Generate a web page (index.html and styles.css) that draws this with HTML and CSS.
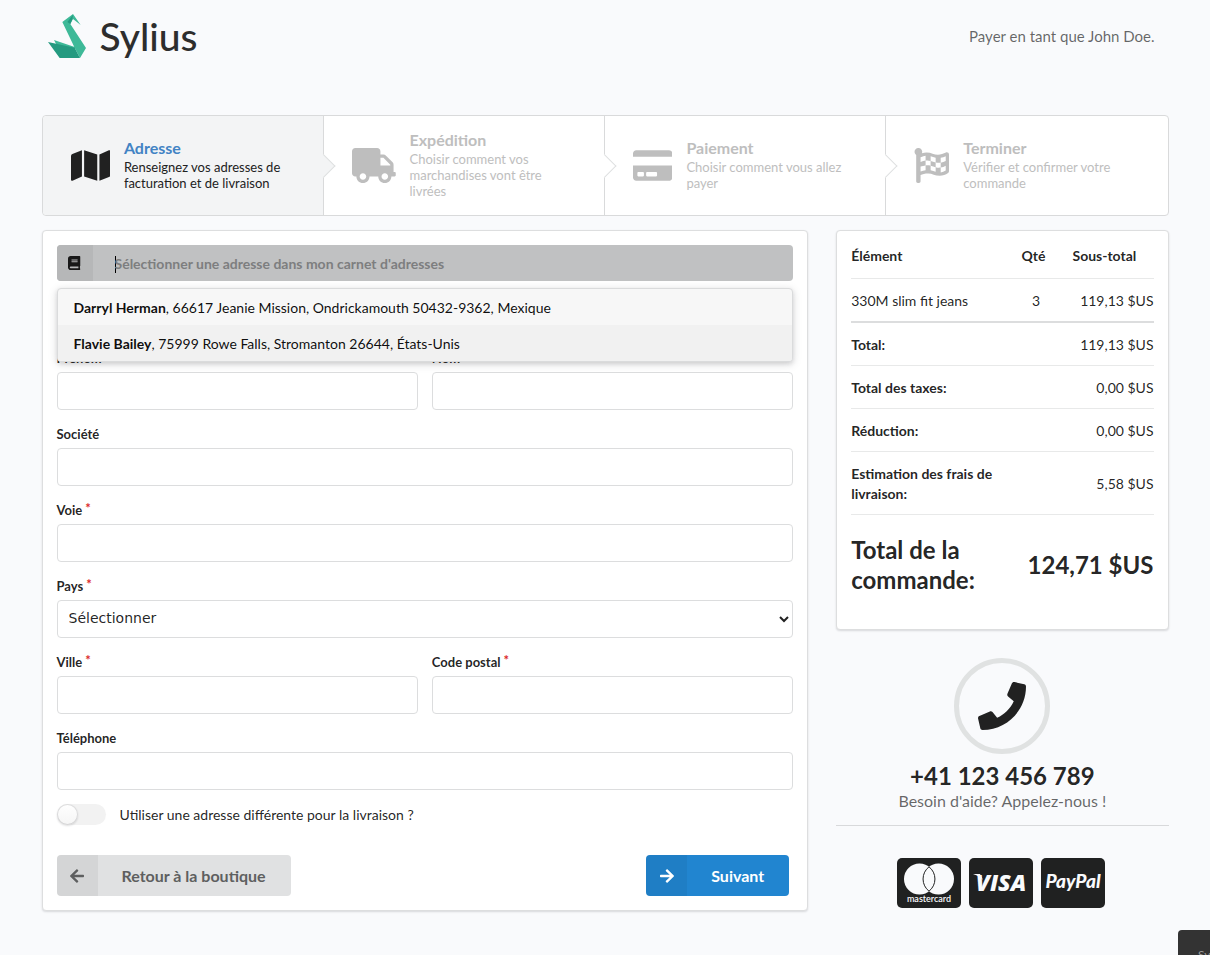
FILE: index.html
```html
<!DOCTYPE html>
<html lang="fr">
<head>
<meta charset="utf-8">
<meta name="viewport" content="width=device-width, initial-scale=1">
<title>Sylius</title>
<link rel="stylesheet" href="styles.css">
</head>
<body>
<div class="container">
  <header class="header">
    <a class="logo" href="#">
      <svg class="logo-mark" viewBox="54 42 114 132" aria-hidden="true">
        <path fill="#3eb998" d="M97 66L129 42L152 75L129 57L121 72L168 144L150 174L134 143ZM72 120L134 141V146L80 136Z"/>
        <path fill="#249a80" d="M54 126L134 143L150 174H89ZM112 66L129 44L127 58L121 72Z"/>
      </svg>
      <span class="logo-text">Sylius</span>
    </a>
    <p class="user-note">Payer en tant que John Doe.</p>
  </header>

  <nav class="steps">
    <a class="step step-active" href="#">
      <svg class="step-icon" viewBox="0 0 576 512"><path d="M0 117.66v346.32c0 11.32 11.43 19.06 21.94 14.86L160 416V32L20.12 87.95A32.006 32.006 0 0 0 0 117.66zM192 416l192 64V96L192 32v384zM554.06 33.16L416 96v384l139.88-55.95A31.996 31.996 0 0 0 576 394.34V48.02c0-11.32-11.43-19.06-21.94-14.86z"/></svg>
      <span class="step-content"><span class="step-title">Adresse</span><span class="step-text">Renseignez vos adresses de facturation et de livraison</span></span>
    </a>
    <div class="step">
      <svg class="step-icon" viewBox="0 0 640 512"><path d="M624 352h-16V243.9c0-12.7-5.1-24.9-14.1-33.9L494 110.1c-9-9-21.2-14.1-33.9-14.1H416V48c0-26.5-21.5-48-48-48H48C21.5 0 0 21.5 0 48v320c0 26.5 21.5 48 48 48h16c0 53 43 96 96 96s96-43 96-96h128c0 53 43 96 96 96s96-43 96-96h48c8.800 0 16-7.200 16-16v-32c0-8.800-7.200-16-16-16zM160 464c-26.500 0-48-21.500-48-48s21.500-48 48-48 48 21.500 48 48-21.500 48-48 48zm320 0c-26.500 0-48-21.500-48-48s21.500-48 48-48 48 21.500 48 48-21.500 48-48 48zm80-208H416V144h44.100l99.900 99.900V256z"/></svg>
      <span class="step-content"><span class="step-title">Expédition</span><span class="step-text">Choisir comment vos marchandises vont être livrées</span></span>
    </div>
    <div class="step">
      <svg class="step-icon" viewBox="0 0 576 512"><path d="M0 432c0 26.500 21.500 48 48 48h480c26.500 0 48-21.500 48-48V256H0v176zm192-68c0-6.600 5.400-12 12-12h136c6.600 0 12 5.400 12 12v40c0 6.600-5.400 12-12 12H204c-6.600 0-12-5.400-12-12v-40zm-128 0c0-6.600 5.400-12 12-12h72c6.600 0 12 5.400 12 12v40c0 6.600-5.400 12-12 12H76c-6.600 0-12-5.400-12-12v-40zM576 80v48H0V80c0-26.500 21.500-48 48-48h480c26.500 0 48 21.500 48 48z"/></svg>
      <span class="step-content"><span class="step-title">Paiement</span><span class="step-text">Choisir comment vous allez payer</span></span>
    </div>
    <div class="step">
      <svg class="step-icon" viewBox="0 0 512 512"><path d="M243.200 189.900V258c26.100 5.900 49.300 15.600 73.600 22.300v-68.200c-26-5.800-49.400-15.500-73.600-22.200zm223.300-123c-34.300 15.900-76.500 31.900-117 31.900C296 98.800 251.700 64 184.300 64c-25 0-47.300 4.400-68 12 2.800-7.300 4.100-15.200 3.600-23.600C118.100 24 94.800 1.200 66.300 0 34.300-1.300 8 24.300 8 56c0 19 9.500 35.800 24 45.900V488c0 13.300 10.700 24 24 24h16c13.300 0 24-10.700 24-24v-94.400c28.300-12.100 63.600-22.100 114.400-22.100 53.600 0 97.800 34.800 165.200 34.800 48.200 0 86.700-16.300 122.500-40.900 8.700-6 13.800-15.800 13.800-26.400V95.900c.1-23.300-24.200-38.800-45.400-29zM169.600 325.500c-25.800 2.700-50 8.200-73.600 16.600v-70.500c26.200-9.300 47.500-15 73.600-17.400v71.300zM464 191c-23.600 9.800-46.300 19.500-73.600 23.900V286c24.800-3.400 51.400-11.800 73.600-26v70.500c-25.100 16.100-48.500 24.700-73.600 27.100V286c-27 3.700-47.900 1.500-73.600-5.600v67.400c-23.900-7.400-47.300-16.700-73.600-21.300V258c-19.700-4.400-40.800-6.800-73.600-3.800v-70c-22.400 3.100-44.600 10.200-73.600 20.900v-70.500c33.200-12.200 50.100-19.800 73.600-22v71.600c27-3.700 48.400-1.300 73.600 5.700v-67.400c23.700 7.400 47.200 16.700 73.600 21.300v68.400c23.700 5.300 47.600 6.900 73.600 2.700V143c27-4.800 52.300-13.600 73.600-22.500z"/></svg>
      <span class="step-content"><span class="step-title">Terminer</span><span class="step-text">Vérifier et confirmer votre commande</span></span>
    </div>
  </nav>

  <div class="columns">
    <main class="segment">
      <form class="form">
        <div class="address-book">
          <div class="search">
            <label class="search-icon" for="book"><svg class="book-icon" viewBox="0 0 448 512"><path d="M448 360V24c0-13.300-10.700-24-24-24H96C43 0 0 43 0 96v320c0 53 43 96 96 96h328c13.300 0 24-10.700 24-24v-16c0-7.500-3.500-14.300-8.900-18.700-4.200-15.400-4.200-59.300 0-74.700 5.400-4.300 8.900-11.100 8.900-18.600zM128 134c0-3.300 2.700-6 6-6h212c3.300 0 6 2.700 6 6v20c0 3.300-2.700 6-6 6H134c-3.300 0-6-2.700-6-6v-20zm0 64c0-3.300 2.700-6 6-6h212c3.300 0 6 2.700 6 6v20c0 3.300-2.700 6-6 6H134c-3.300 0-6-2.700-6-6v-20zm253.400 250H96c-17.700 0-32-14.300-32-32 0-17.600 14.400-32 32-32h285.400c-1.900 17.100-1.900 46.900 0 64z"/></svg></label>
            <input class="search-input" id="book" type="text" placeholder="Sélectionner une adresse dans mon carnet d'adresses" autocomplete="off">
          </div>
          <div class="menu" role="listbox">
            <div class="menu-item" role="option"><strong>Darryl Herman</strong>, 66617 Jeanie Mission, Ondrickamouth 50432-9362, Mexique</div>
            <div class="menu-item menu-item-selected" role="option"><strong>Flavie Bailey</strong>, 75999 Rowe Falls, Stromanton 26644, États-Unis</div>
          </div>
        </div>

        <div class="fields">
          <div class="field"><label for="first">Prénom</label><input id="first" type="text"></div>
          <div class="field"><label for="last">Nom</label><input id="last" type="text"></div>
        </div>
        <div class="field"><label for="company">Société</label><input id="company" type="text"></div>
        <div class="field required"><label for="street">Voie</label><input id="street" type="text"></div>
        <div class="field required"><label for="country">Pays</label><select id="country"><option>Sélectionner</option></select></div>
        <div class="fields">
          <div class="field required"><label for="city">Ville</label><input id="city" type="text"></div>
          <div class="field required"><label for="postcode">Code postal</label><input id="postcode" type="text"></div>
        </div>
        <div class="field"><label for="phone">Téléphone</label><input id="phone" type="text"></div>
        <label class="toggle"><input class="toggle-input" type="checkbox"><span>Utiliser une adresse différente pour la livraison ?</span></label>

        <div class="actions">
          <a class="button" href="#"><span class="button-icon"><svg viewBox="0 0 448 512"><path d="M257.500 445.100l-22.200 22.200c-9.400 9.400-24.600 9.400-33.900 0L7 273c-9.400-9.400-9.400-24.600 0-33.900L201.400 44.700c9.400-9.400 24.600-9.400 33.900 0l22.200 22.200c9.500 9.500 9.300 25-.4 34.300L136.600 216H424c13.300 0 24 10.700 24 24v32c0 13.300-10.700 24-24 24H136.600l120.500 114.800c9.800 9.300 10 24.800.4 34.300z"/></svg></span><span class="button-label">Retour à la boutique</span></a>
          <button class="button button-primary" type="button"><span class="button-icon"><svg viewBox="0 0 448 512"><path d="M190.500 66.900l22.200-22.200c9.400-9.400 24.600-9.400 33.900 0L441 239c9.400 9.400 9.400 24.600 0 33.900L246.600 467.300c-9.400 9.400-24.600 9.400-33.900 0l-22.200-22.200c-9.500-9.500-9.300-25 .4-34.300L311.400 296H24c-13.300 0-24-10.700-24-24v-32c0-13.300 10.700-24 24-24h287.400L190.900 101.200c-9.800-9.300-10-24.800-.4-34.300z"/></svg></span><span class="button-label">Suivant</span></button>
        </div>
      </form>
    </main>

    <aside class="sidebar">
      <section class="segment">
        <table class="summary">
          <colgroup><col><col class="col-qty"><col class="col-sum"></colgroup>
          <thead><tr><th>Élément</th><th>Qté</th><th>Sous-total</th></tr></thead>
          <tbody><tr><td>330M slim fit jeans</td><td class="center">3</td><td class="right">119,13 $US</td></tr></tbody>
          <tfoot>
            <tr><th colspan="2">Total:</th><td class="right">119,13 $US</td></tr>
            <tr><th colspan="2">Total des taxes:</th><td class="right">0,00 $US</td></tr>
            <tr><th colspan="2">Réduction:</th><td class="right">0,00 $US</td></tr>
            <tr><th>Estimation des frais de livraison:</th><td class="right" colspan="2">5,58 $US</td></tr>
            <tr class="grand-total"><th>Total de la commande:</th><td class="right" colspan="2">124,71 $US</td></tr>
          </tfoot>
        </table>
      </section>

      <section class="help">
        <span class="help-icon"><svg viewBox="0 0 512 512"><path d="M493.400 24.600l-104-24c-11.300-2.600-22.900 3.300-27.500 13.900l-48 112c-4.200 9.800-1.400 21.300 6.900 28l60.600 49.600c-36 76.700-98.900 140.500-177.200 177.200l-49.600-60.600c-6.800-8.300-18.200-11.100-28-6.900l-112 48C3.900 366.500-2 378.100.6 389.400l24 104C27.100 504.200 36.700 512 48 512c256.100 0 464-207.500 464-464 0-11.200-7.700-20.900-18.600-23.400z"/></svg></span>
        <h2 class="help-number">+41 123 456 789</h2>
        <p class="help-text">Besoin d'aide? Appelez-nous !</p>
      </section>

      <div class="cards">
        <svg class="card" viewBox="0 0 64 50"><rect width="64" height="50" rx="5" fill="#202121"/><circle cx="22.500" cy="21" r="15.500" fill="#f9fafc"/><circle cx="41.500" cy="21" r="15.500" fill="#f9fafc"/><path d="M32 8.800a15.500 15.500 0 0 1 0 24.400a15.500 15.500 0 0 1 0-24.400z" fill="#f9fafc" stroke="#202121"/><text class="mc-text" x="32" y="44" text-anchor="middle">mastercard</text></svg>
        <svg class="card" viewBox="0 0 64 50"><rect width="64" height="50" rx="5" fill="#202121"/><text class="visa-text" x="32" y="33" text-anchor="middle">VISA</text><path d="M4 16h7l3 6q-3-4-10-6z" fill="#f9fafc"/></svg>
        <svg class="card" viewBox="0 0 64 50"><rect width="64" height="50" rx="5" fill="#202121"/><text class="paypal-text" x="32" y="30" text-anchor="middle">PayPal</text></svg>
      </div>
    </aside>
  </div>
</div>
<div class="corner-tab">Sy</div>
</body>
</html>
```
FILE: styles.css
```css
* { box-sizing: border-box; }
body {
  margin: 0;
  min-height: 100vh;
  background: #f9fafc;
  color: rgba(0, 0, 0, .87);
  font: 14px/20px Lato, "Open Sans", sans-serif;
}
a { color: inherit; text-decoration: none; }
h2, p { margin: 0; }
input, select, button { font: inherit; color: inherit; }
svg { fill: currentColor; }

.container { max-width: 1161px; margin: 0 auto; padding: 0 17px; }

.header {
  display: flex;
  justify-content: space-between;
  align-items: center;
  height: 72px;
  padding: 0 14px 0 6px;
  margin-bottom: 43px;
}
.logo { display: flex; align-items: center; gap: 14px; }
.logo-mark { width: 38px; height: 44px; }
.logo-text { font-size: 39px; line-height: 44px; font-weight: 500; color: #2d2d2d; }
.user-note { font-size: 15px; color: rgba(0, 0, 0, .6); }

.steps {
  display: grid;
  grid-template-columns: repeat(4, 1fr);
  border: 1px solid #d9dadb;
  border-radius: 4px;
  background: #fff;
  margin-bottom: 14px;
}
.step {
  position: relative;
  display: flex;
  align-items: center;
  gap: 14px;
  min-height: 99px;
  padding: 14px 28px;
  color: #bebebe;
}
.step:not(:last-child) { border-right: 1px solid #d9dadb; }
.step:not(:last-child)::after {
  content: "";
  position: absolute;
  z-index: 1;
  top: 50%;
  right: -9px;
  width: 16px;
  height: 16px;
  border: solid #dfe0e1;
  border-width: 0 1px 1px 0;
  background: #fff;
  transform: translateY(-50%) rotate(-45deg);
}
.step-active { background: #f3f4f5; color: #212121; border-radius: 4px 0 0 4px; }
.step-active:not(:last-child)::after { background: #f3f4f5; }
.step-icon { flex: none; height: 35px; }
.step-content { display: flex; flex-direction: column; padding-bottom: 2px; }
.step-title { margin-bottom: 1px; font-size: 16px; line-height: 20px; font-weight: 700; }
.step-active .step-title { color: #4183c4; }
.step-text { font-size: 13px; line-height: 16px; }

.columns {
  display: grid;
  grid-template-columns: minmax(0, 766fr) minmax(0, 332fr);
  gap: 28px;
  align-items: start;
}
.segment {
  padding: 14px;
  background: #fff;
  border: 1px solid #dddedf;
  border-radius: 4px;
  box-shadow: 0 1px 2px rgba(34, 36, 38, .15);
}

.address-book { position: relative; margin-bottom: 67px; }
.search {
  display: flex;
  height: 36px;
  border-radius: 4px;
  overflow: hidden;
  background: #c0c1c2;
}
.search-icon {
  flex: none;
  display: grid;
  place-items: center;
  width: 36px;
  background: #b6b7b8;
}
.book-icon { height: 14px; }
.search-input {
  flex: 1;
  min-width: 0;
  padding: 2px 22px 0;
  border: 0;
  outline: 0;
  background: none;
  font-weight: 700;
}
.search-input::placeholder { color: #7d7e7f; opacity: 1; }
/* Insertion mark shown while the box is empty */
.search-input:placeholder-shown {
  caret-color: transparent;
  background: linear-gradient(#000, #000) 22px 11px / 1px 17px no-repeat;
}
.menu {
  position: absolute;
  z-index: 2;
  top: 43px;
  left: 0;
  right: 0;
  background: #f7f7f7;
  border: 1px solid #dadbdc;
  border-radius: 4px;
  box-shadow: 0 2px 4px rgba(34, 36, 38, .12), 0 2px 10px rgba(34, 36, 38, .15);
  overflow: hidden;
}
.menu-item { padding: 9px 16px 7px; color: rgba(0, 0, 0, .95); }
.menu-item-selected { background: #f1f1f1; }

.fields { display: grid; grid-template-columns: 1fr 1fr; gap: 14px; }
.field { margin-bottom: 14px; }
.field label {
  display: block;
  height: 20px;
  margin-bottom: 4px;
  font-size: 13px;
  font-weight: 700;
}
.required label::after { content: "*"; margin-left: 3px; color: #db2828; line-height: 0; vertical-align: 2px; }
.field input, .field select {
  display: block;
  width: 100%;
  height: 38px;
  padding: 0 14px;
  background: #fff;
  border: 1px solid #dcddde;
  border-radius: 4px;
}
.field select { padding: 0 0 3px 7px; font-family: "DejaVu Sans", sans-serif; }

.toggle { display: flex; align-items: center; gap: 14px; height: 21px; }
.toggle-input {
  appearance: none;
  width: 49px;
  height: 21px;
  margin: 0;
  border-radius: 11px;
  background: #f2f2f2;
}
.toggle-input::before {
  content: "";
  display: block;
  width: 21px;
  height: 21px;
  border-radius: 50%;
  background: linear-gradient(#fff, #f5f5f5);
  box-shadow: 0 1px 2px rgba(34, 36, 38, .15), inset 0 0 0 1px rgba(34, 36, 38, .15);
}
.toggle-input:checked::before { margin-left: 28px; }

.actions { display: flex; justify-content: space-between; padding-right: 4px; margin-top: 30px; }
.button {
  display: flex;
  height: 41px;
  padding: 0;
  border: 0;
  border-radius: 4px;
  overflow: hidden;
  background: #e0e1e2;
  color: #5e5f60;
  font-size: 16px;
  line-height: 41px;
  font-weight: 700;
  cursor: pointer;
}
.button-icon { display: grid; place-items: center; width: 41px; height: 41px; background: rgba(0, 0, 0, .05); }
.button-icon svg { height: 16px; }
.button-label { padding: 0 25px 0 24px; }
.button-primary { background: #2185d0; color: #fff; }

.summary { width: 100%; table-layout: fixed; border-collapse: separate; border-spacing: 0; }
.col-qty { width: 51px; }
.col-sum { width: 92px; }
.summary th, .summary td { padding: 12px 11px 10px; text-align: left; border-bottom: 1px solid #e8e9e9; }
.summary th:first-child, .summary td:first-child { padding-left: 0; }
.summary th:last-child, .summary td:last-child { padding-right: 0; }
.summary thead th { padding-top: 1px; padding-bottom: 12px; }
.summary tbody td { border-bottom: 2px solid #dcddde; }
.summary .right { text-align: right; }
.summary .center { text-align: center; }
.summary .grand-total th, .summary .grand-total td {
  padding-top: 20px;
  padding-bottom: 20px;
  border: 0;
  font-size: 24px;
  line-height: 30px;
  font-weight: 700;
}

.help {
  display: flex;
  flex-direction: column;
  align-items: center;
  margin-top: 28px;
  padding-bottom: 14px;
  border-bottom: 1px solid #d8d9db;
}
.help-icon {
  display: grid;
  place-items: center;
  width: 96px;
  height: 96px;
  margin-bottom: 7px;
  border: 5px solid #e0e2e2;
  border-radius: 50%;
}
.help-icon svg { width: 48px; }
.help-number { font-size: 24px; line-height: 30px; }
.help-text { font-size: 16px; color: rgba(0, 0, 0, .6); }

.cards { display: flex; justify-content: center; gap: 8px; margin-top: 32px; padding-right: 3px; }
.card { width: 64px; height: 50px; }
.card text { fill: #f9fafc; font-family: Lato, sans-serif; }
.card .mc-text { font-size: 9px; font-weight: 600; }
.card .visa-text { font: italic 900 23px "Open Sans", sans-serif; }
.card .paypal-text { font: italic 900 19px Lato, sans-serif; }

.corner-tab {
  position: fixed;
  right: 0;
  bottom: 0;
  width: 32px;
  height: 25px;
  padding: 15px 0 0 20px;
  overflow: hidden;
  border-radius: 4px 0 0 0;
  background: #333;
  color: #999;
  font-size: 12px;
  line-height: 20px;
}
```
